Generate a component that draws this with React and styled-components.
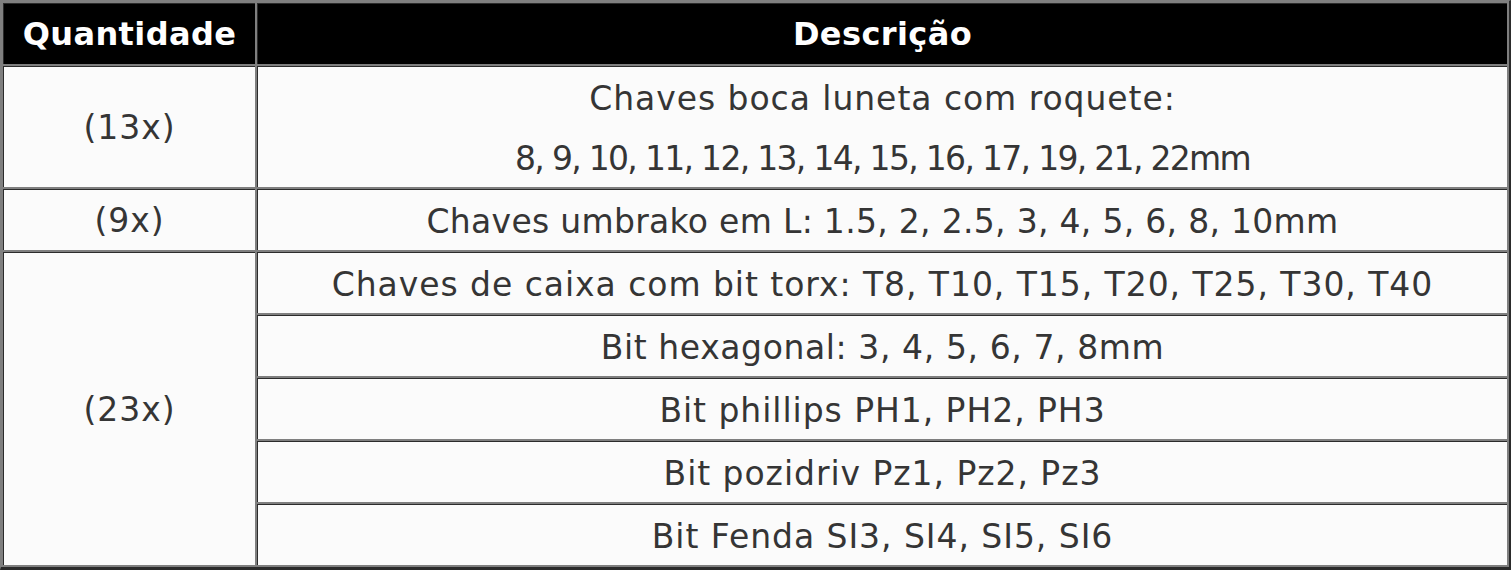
import styled, { createGlobalStyle } from 'styled-components'

const GlobalStyle = createGlobalStyle`
  html, body {
    margin: 0;
    padding: 0;
    background: #ffffff;
  }
`

// spacing evens out the wide DejaVu digits against the original font
const rows = [
  {
    qty: '(13x)',
    items: [
      [
        { text: 'Chaves boca luneta com roquete:' },
        { text: '8, 9, 10, 11, 12, 13, 14, 15, 16, 17, 19, 21, 22mm', spacing: -1.7 },
      ],
    ],
  },
  { qty: '(9x)', items: [[{ text: 'Chaves umbrako em L: 1.5, 2, 2.5, 3, 4, 5, 6, 8, 10mm', spacing: 0.3 }]] },
  {
    qty: '(23x)',
    items: [
      [{ text: 'Chaves de caixa com bit torx: T8, T10, T15, T20, T25, T30, T40' }],
      [{ text: 'Bit hexagonal: 3, 4, 5, 6, 7, 8mm', spacing: 0.6 }],
      [{ text: 'Bit phillips PH1, PH2, PH3' }],
      [{ text: 'Bit pozidriv Pz1, Pz2, Pz3' }],
      [{ text: 'Bit Fenda SI3, SI4, SI5, SI6' }],
    ],
  },
]

export default function App() {
  return (
    <>
      <GlobalStyle />
      <Table>
        <thead>
          <tr>
            <HeadCell $first>Quantidade</HeadCell>
            <HeadCell>Descrição</HeadCell>
          </tr>
        </thead>
        <tbody>
          {rows.map((row) =>
            row.items.map((lines, i) => (
              <tr key={row.qty + i}>
                {i === 0 && <Cell rowSpan={row.items.length}>{row.qty}</Cell>}
                <Cell>
                  {lines.map((line) => (
                    <Line key={line.text} $spacing={line.spacing}>
                      {line.text}
                    </Line>
                  ))}
                </Cell>
              </tr>
            ))
          )}
        </tbody>
      </Table>
    </>
  )
}

const Table = styled.table`
  width: 1511px;
  border-collapse: separate;
  border-spacing: 2px;
  background: #7f7f7f;
  border-style: solid;
  border-color: #7f7f7f #2b2b2b #2b2b2b #7f7f7f;
  border-width: 1px 2px 3px 1px;
  font-family: 'DejaVu Sans', 'Liberation Sans', sans-serif;
  color: #353535;
  table-layout: fixed;
`

const HeadCell = styled.th`
  width: ${(p) => (p.$first ? '251px' : 'auto')};
  height: 60px;
  padding: 0;
  background: #000000;
  color: #ffffff;
  border-top: 1px solid #2b2b2b;
  border-left: 1px solid #2b2b2b;
  font-size: 32px;
  font-weight: 700;
  letter-spacing: 0.4px;
  text-align: center;
  vertical-align: middle;
`

const Cell = styled.td`
  height: 60px;
  padding: 0;
  background: #fbfbfb;
  border-top: 1px solid #2b2b2b;
  border-left: 1px solid #2b2b2b;
  font-size: 33px;
  letter-spacing: 0.95px;
  text-align: center;
  vertical-align: middle;
`

const Line = styled.div`
  height: 60px;
  line-height: 64px;
  white-space: nowrap;
  letter-spacing: ${(p) => (p.$spacing !== undefined ? `${p.$spacing}px` : 'inherit')};
`
